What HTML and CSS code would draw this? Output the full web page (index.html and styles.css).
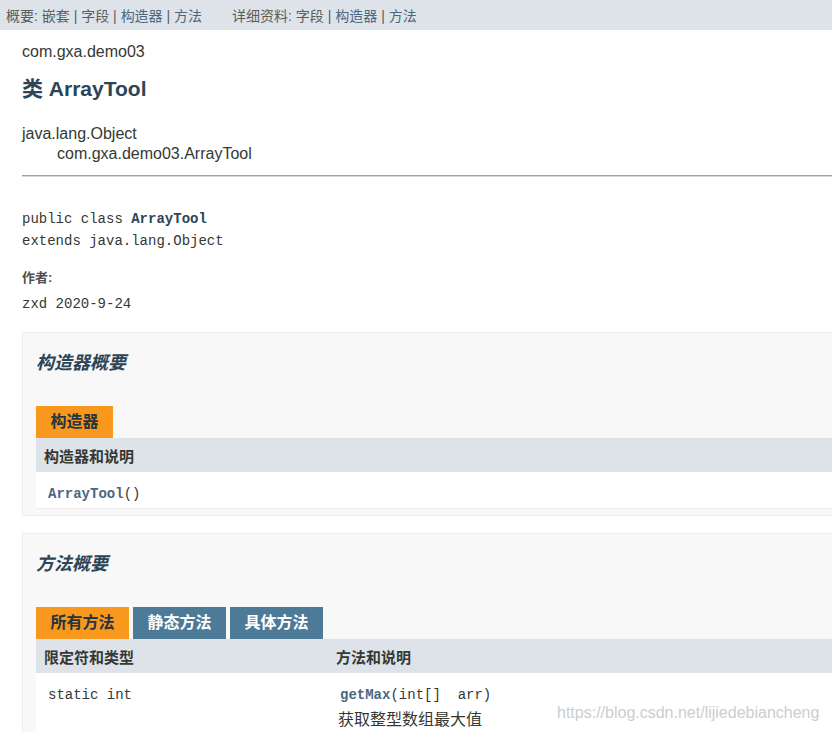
FILE: index.html
```html
<html>
    <head>
        <meta charset="utf-8">
        <link rel="stylesheet" href="styles.css">
    </head>
    <body>
        <div class="subnav">
            <div class="subnav-group">概要:&nbsp;嵌套&nbsp;|&nbsp;字段&nbsp;|&nbsp;<a href="#constructor">构造器</a>&nbsp;|&nbsp;<a href="#method">方法</a></div>
            <div class="subnav-group">详细资料:&nbsp;字段&nbsp;|&nbsp;<a href="#constructor">构造器</a>&nbsp;|&nbsp;<a href="#method">方法</a></div>
        </div>

        <div class="page">
            <div class="pkg">com.gxa.demo03</div>
            <h2 class="title">类 ArrayTool</h2>

            <div class="inherit">
                <div>java.lang.Object</div>
                <div class="inherit-child">com.gxa.demo03.ArrayTool</div>
            </div>
            <div class="rule"></div>

            <pre class="signature">public class <b>ArrayTool</b>
extends java.lang.Object</pre>

            <div class="label">作者:</div>
            <div class="mono author">zxd 2020-9-24</div>

            <div class="block" id="constructor">
                <h3>构造器概要</h3>
                <div class="tabs">
                    <span class="tab active">构造器</span>
                </div>
                <div class="table">
                    <div class="thead">
                        <div class="col">构造器和说明</div>
                    </div>
                    <div class="trow">
                        <div class="col mono"><a class="code-link">ArrayTool</a>()</div>
                    </div>
                </div>
            </div>

            <div class="block" id="method">
                <h3>方法概要</h3>
                <div class="tabs">
                    <span class="tab active">所有方法</span>
                    <span class="tab">静态方法</span>
                    <span class="tab">具体方法</span>
                </div>
                <div class="table">
                    <div class="thead">
                        <div class="col first">限定符和类型</div>
                        <div class="col">方法和说明</div>
                    </div>
                    <div class="trow">
                        <div class="col first mono">static int</div>
                        <div class="col">
                            <div class="mono"><a class="code-link">getMax</a>(int[]&nbsp;&nbsp;arr)</div>
                            <div class="desc">获取整型数组最大值</div>
                        </div>
                    </div>
                </div>
            </div>
        </div>

        <div class="watermark">https://blog.csdn.net/lijiedebiancheng</div>
    </body>
</html>
```
FILE: styles.css
```css
body{
    margin: 0;
    font-family: "Liberation Sans", "Noto Sans CJK SC", sans-serif;
    color: #353833;
    background: #fff;
    overflow: hidden;
    position: relative;
    height: 732px;
}

a{
    color: #4a6782;
    text-decoration: none;
}

.subnav{
    display: flex;
    gap: 30px;
    height: 30px;
    align-items: center;
    padding-left: 6px;
    background-color: #dee3e9;
    font-size: 14px;
    color: #5a5d5b;
}

.page{
    width: 1100px;
    padding-left: 22px;
}

.pkg{
    margin-top: 13px;
    font-size: 16px;
    line-height: 18px;
}

.title{
    margin: 16px 0 0 0;
    font-size: 21px;
    line-height: 24px;
    color: #2c4557;
}

.inherit{
    margin-top: 23px;
    font-size: 16px;
    line-height: 20px;
}

.inherit-child{
    padding-left: 35px;
}

.rule{
    margin-top: 11px;
    width: 820px;
    height: 1px;
    background-color: #9f9f9f;
    border-bottom: 1px solid #d8d8d8;
}

.mono, .signature{
    font-family: "Liberation Mono", "Noto Sans CJK SC", monospace;
    font-size: 14px;
}

.signature{
    margin: 31px 0 0 0;
    line-height: 22px;
}

.signature b{
    color: #2c4557;
}

.label{
    margin-top: 18px;
    font-size: 13px;
    line-height: 16px;
    font-weight: bold;
    color: #4e4e4e;
}

.author{
    margin-top: 8px;
    line-height: 20px;
}

.block{
    margin-top: 18px;
    padding: 18px 0 6px 13px;
    background-color: #f8f8f8;
    border: 1px solid #ededed;
}

.block + .block{
    margin-top: 17px;
}

.block h3{
    margin: 0;
    font-size: 18px;
    line-height: 24px;
    font-style: italic;
    font-weight: 600;
    color: #2c4557;
}

.tabs{
    display: flex;
    gap: 4px;
    margin-top: 31px;
}

.tab{
    height: 32px;
    line-height: 32px;
    padding: 0 14.5px;
    font-size: 16px;
    font-weight: bold;
    color: #fff;
    background-color: #4d7a97;
}

.tab.active{
    color: #253441;
    background-color: #f8981d;
}

.table{
    background-color: #fff;
    border-bottom: 1px solid #eeeeee;
}

.thead{
    display: flex;
    height: 34px;
    align-items: center;
    background-color: #dee3e9;
    font-size: 15px;
    font-weight: bold;
}

.col{
    box-sizing: border-box;
}

.thead .col{
    padding-left: 8px;
}

.trow{
    display: flex;
    padding: 13px 0 5px 0;
}

.trow .col{
    padding-left: 12px;
    line-height: 18px;
}

.col.first{
    width: 292px;
}

.code-link{
    font-weight: bold;
}

.desc{
    font-size: 16px;
    line-height: 32px;
    margin-left: -2px;
}

.watermark{
    position: absolute;
    left: 557px;
    top: 704px;
    font-size: 16px;
    color: #cdcdcd;
}
```
